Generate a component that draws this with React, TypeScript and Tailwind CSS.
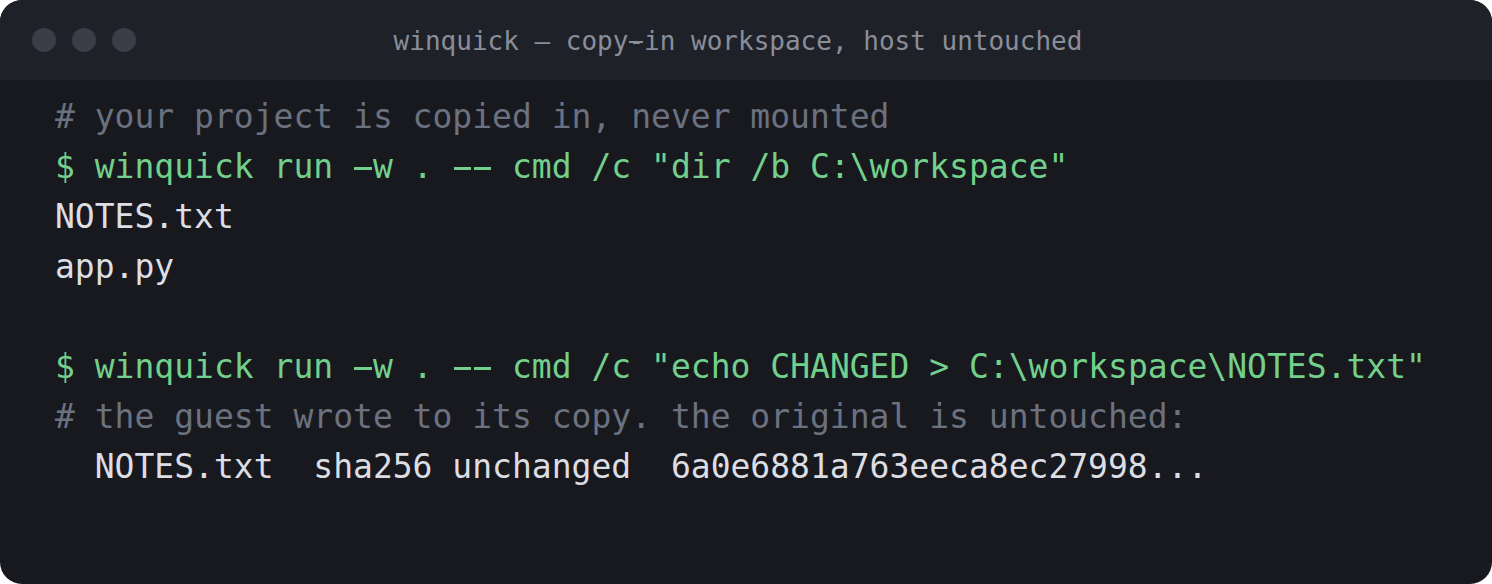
import React from "react";

const mono = { fontFamily: '"DejaVu Sans Mono", "Liberation Mono", monospace' };

function Txt({ t }: { t: string }) {
  const parts = t.split(/(-)/);
  return (
    <>
      {parts.map((p, i) =>
        p === "-" ? (
          <span
            key={i}
            className="relative after:absolute after:left-[0.04em] after:right-[0.04em] after:top-[0.6em] after:h-[0.09em] after:bg-current after:content-['']"
          >
            -
          </span>
        ) : (
          <React.Fragment key={i}>{p}</React.Fragment>
        )
      )}
    </>
  );
}

export default function App() {
  const lines: { t: string; c: string }[] = [
    { t: "# your project is copied in, never mounted", c: "text-[#6b717f]" },
    { t: '$ winquick run -w . -- cmd /c "dir /b C:\\workspace"', c: "text-[#72d08c]" },
    { t: "NOTES.txt", c: "text-[#dcdee3]" },
    { t: "app.py", c: "text-[#dcdee3]" },
    { t: "\u00a0", c: "text-[#dcdee3]" },
    { t: '$ winquick run -w . -- cmd /c "echo CHANGED > C:\\workspace\\NOTES.txt"', c: "text-[#72d08c]" },
    { t: "# the guest wrote to its copy. the original is untouched:", c: "text-[#6b717f]" },
    { t: "  NOTES.txt  sha256 unchanged  6a0e6881a763eeca8ec27998...", c: "text-[#dcdee3]" },
  ];
  return (
    <div className="w-[1492px] h-[584px] bg-white" style={mono}>
      <div className="w-full h-full rounded-[22px] overflow-hidden bg-[#18191e] flex flex-col">
        <div className="h-[80px] bg-[#1f2129] flex items-center pl-8 shrink-0">
          <div className="flex gap-4">
            <div className="w-6 h-6 rounded-full bg-[#3b3e48]" />
            <div className="w-6 h-6 rounded-full bg-[#3b3e48]" />
            <div className="w-6 h-6 rounded-full bg-[#3b3e48]" />
          </div>
          <div className="flex-1 text-center text-[26px] text-[#8a8e99] whitespace-pre pt-[2px]">
            <Txt t="winquick — copy-in workspace, host untouched" />
          </div>
          <div className="w-[152px]" />
        </div>
        <div className="pl-[55px] pt-3 text-[33px] leading-[50px]">
          {lines.map((l, i) => (
            <div key={i} className={`${l.c} whitespace-pre`}>
              <Txt t={l.t} />
            </div>
          ))}
        </div>
      </div>
    </div>
  );
}
